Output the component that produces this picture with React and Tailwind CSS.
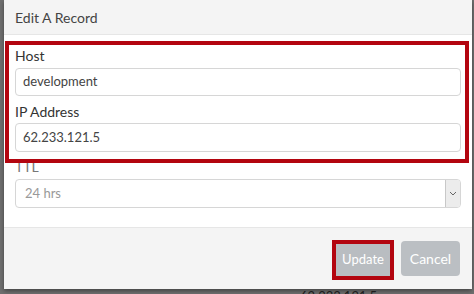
export default function App() {
  return (
    <div className="w-[474px] h-[294px] bg-[#6f6f6f] overflow-hidden relative font-['Lato','Open_Sans',sans-serif]">
      {/* text from the page behind the modal */}
      <div className="absolute left-[300px] top-[287px] text-[13px] text-[#222]">62.233.121.5</div>

      <div className="absolute left-[4px] top-0 w-[468px] h-[289px] bg-white rounded-br-[3px] flex flex-col shadow-[0_2px_4px_rgba(0,0,0,0.4)]">
        <div className="h-[35px] bg-[#f4f4f4] border-b border-[#e6e6e6] flex items-center pl-[11px] text-[14px] text-[#444]">
          Edit A Record
        </div>

        <div className="px-[11px] pt-[11px] pb-[19px] flex flex-col">
          <label className="text-[14px] leading-[20px] text-[#333]">Host</label>
          <div className="mt-[2px] h-[28px] border border-[#d6d6d6] rounded-[4px] flex items-center px-[7px] text-[13px] text-[#444]">
            development
          </div>
          <label className="mt-[6px] text-[14px] leading-[20px] text-[#333]">IP Address</label>
          <div className="mt-[1px] h-[29px] border border-[#d6d6d6] rounded-[4px] flex items-center px-[7px] text-[13px] text-[#444]">
            62.233.121.5
          </div>
          <label className="mt-[5px] text-[14px] leading-[20px] text-[#777]">TTL</label>
          <div className="mt-[2px] h-[29px] border border-[#d6d6d6] rounded-[4px] flex items-center text-[13px] text-[#999]">
            <span className="flex-1 pl-[9px]">24 hrs</span>
            <span className="w-[15px] h-[27px] border-l border-[#c8c8c8] bg-[#ececec] rounded-r-[3px] flex items-center justify-center">
              <svg width="8" height="5" viewBox="0 0 8 5" fill="none" stroke="#666" strokeWidth="1">
                <path d="M1 1l3 3 3-3" />
              </svg>
            </span>
          </div>
        </div>

        <div className="flex-1 bg-[#f4f4f4] border-t border-[#e6e6e6] flex items-center justify-end gap-[7px] pr-[12px]">
          <div className="border-[4px] border-[#b3050f] mt-[2px]">
            <button className="w-[54px] h-[32px] bg-[#b9bdc1] text-white text-[13px]">
              Update
            </button>
          </div>
          <button className="w-[59px] h-[35px] mt-[-1px] bg-[#bbbfc3] rounded-[4px] text-white text-[14px]">
            Cancel
          </button>
        </div>
      </div>

      {/* annotation box */}
      <div className="absolute left-[5px] top-[41px] w-[464px] h-[122px] border-[4px] border-[#b3050f] pointer-events-none" />
    </div>
  );
}
